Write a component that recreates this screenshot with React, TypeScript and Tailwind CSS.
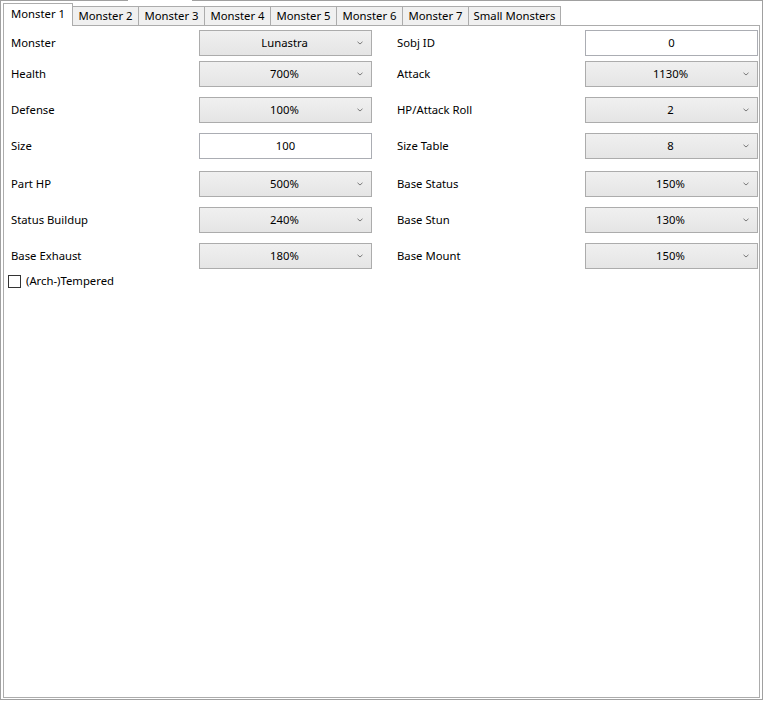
import React from 'react';

const tabs = ['Monster 1', 'Monster 2', 'Monster 3', 'Monster 4', 'Monster 5', 'Monster 6', 'Monster 7', 'Small Monsters'];
const tabWidths = ['w-[70px]', 'w-[66px]', 'w-[67px]', 'w-[67px]', 'w-[67px]', 'w-[67px]', 'w-[67px]', 'w-[93px]'];

type Field = { label: string; value: string; kind: 'combo' | 'text' };

const rows: { left: Field; right: Field; mt: string }[] = [
  { left: { label: 'Monster', value: 'Lunastra', kind: 'combo' }, right: { label: 'Sobj ID', value: '0', kind: 'text' }, mt: 'mt-[2px]' },
  { left: { label: 'Health', value: '700%', kind: 'combo' }, right: { label: 'Attack', value: '1130%', kind: 'combo' }, mt: 'mt-[5px]' },
  { left: { label: 'Defense', value: '100%', kind: 'combo' }, right: { label: 'HP/Attack Roll', value: '2', kind: 'combo' }, mt: 'mt-[10px]' },
  { left: { label: 'Size', value: '100', kind: 'text' }, right: { label: 'Size Table', value: '8', kind: 'combo' }, mt: 'mt-[10px]' },
  { left: { label: 'Part HP', value: '500%', kind: 'combo' }, right: { label: 'Base Status', value: '150%', kind: 'combo' }, mt: 'mt-[12px]' },
  { left: { label: 'Status Buildup', value: '240%', kind: 'combo' }, right: { label: 'Base Stun', value: '130%', kind: 'combo' }, mt: 'mt-[10px]' },
  { left: { label: 'Base Exhaust', value: '180%', kind: 'combo' }, right: { label: 'Base Mount', value: '150%', kind: 'combo' }, mt: 'mt-[10px]' },
];

const Chevron = () => (
  <svg width="6" height="4" viewBox="0 0 6 4" className="absolute right-[8px] top-[10px]">
    <path d="M0.5 0.8 L3 3 L5.5 0.8" fill="none" stroke="#7a7a7a" strokeWidth="1" />
  </svg>
);

const Control = ({ field }: { field: Field }) => {
  if (field.kind === 'text') {
    return (
      <div className="h-[26px] border border-[#abadb3] bg-white flex items-center justify-center">
        {field.value}
      </div>
    );
  }
  return (
    <div className="relative h-[26px] border border-[#acacac] bg-gradient-to-b from-[#f0f0f0] to-[#e5e5e5] flex items-center justify-center pr-[2px]">
      {field.value}
      <Chevron />
    </div>
  );
};

const App: React.FC = () => {
  return (
    <div className="relative w-[764px] h-[701px] bg-white text-[11.3px] text-black" style={{ fontFamily: '"Noto Sans", "Open Sans", sans-serif' }}>
      <div className="w-[763px] h-[700px] border border-[#a0a0a0] pl-[2px] pt-[2px]">
        {/* tab strip */}
        <div className="flex items-end h-[22px]">
          {tabs.map((t, i) =>
            i === 0 ? (
              <div
                key={t}
                className={`relative z-10 ${tabWidths[i]} h-[23px] -mb-px bg-white border border-b-0 border-[#acacac] flex items-start pt-[2px] pl-[7px]`}
              >
                {t}
              </div>
            ) : (
              <div
                key={t}
                className={`${tabWidths[i]} h-[19px] -ml-px bg-[#f0f0f0] border border-b-0 border-[#acacac] flex items-center justify-center leading-none ${i === 1 ? 'ml-0 border-l-0' : ''}`}
              >
                {t}
              </div>
            )
          )}
        </div>
        {/* panel */}
        <div className="w-[757px] h-[673px] border border-[#acacac] pt-[2px] pl-[7px]">
          {rows.map((r) => (
            <div key={r.left.label} className={`grid grid-cols-[188px_173px_25px_188px_173px] items-center ${r.mt}`}>
              <div>{r.left.label}</div>
              <Control field={r.left} />
              <div />
              <div>{r.right.label}</div>
              <Control field={r.right} />
            </div>
          ))}
          <div className="flex items-center mt-[6px] -ml-[3px] h-[13px]">
            <div className="w-[13px] h-[13px] border border-[#333333] bg-white" />
            <span className="ml-[5px]">(Arch-)Tempered</span>
          </div>
        </div>
      </div>
      {/* gap in outer frame top edge */}
      <div className="absolute left-[128px] top-0 w-[64px] h-px bg-white" />
    </div>
  );
};

export default App;
